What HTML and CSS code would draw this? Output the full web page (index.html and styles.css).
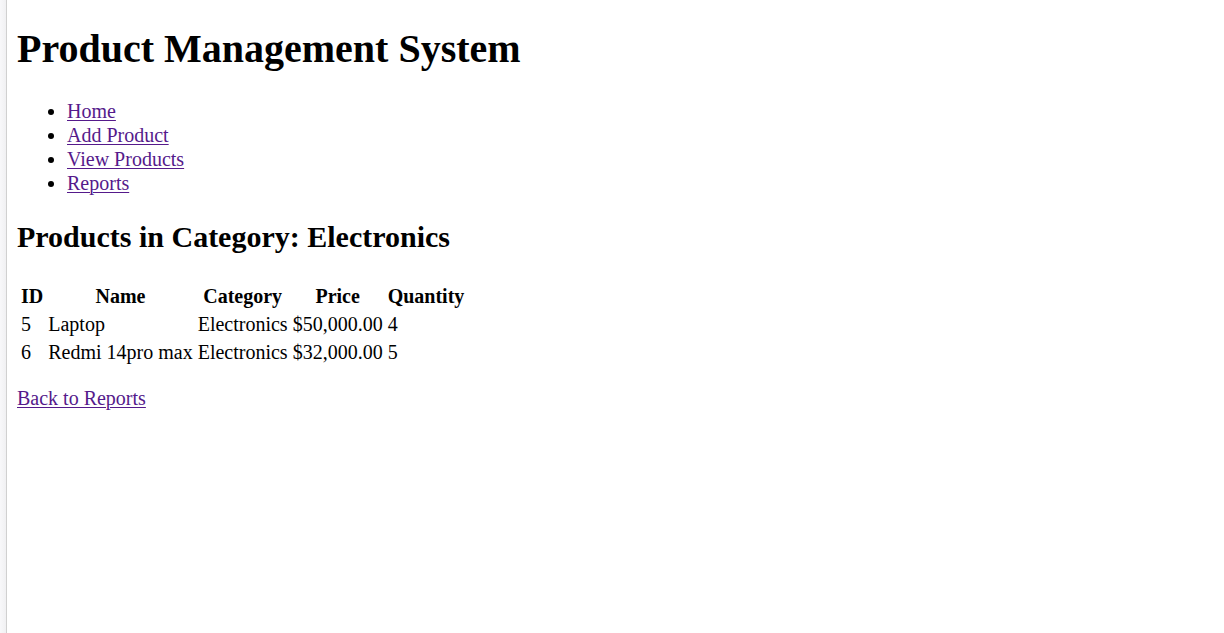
FILE: index.html
```html
<!DOCTYPE html>
<html lang="en">
<head>
<meta charset="utf-8">
<title>Product Management System</title>
<link rel="stylesheet" href="styles.css">
</head>
<body>
<div class="page">
  <header>
    <h1 class="site-title">Product Management System</h1>
    <nav>
      <ul class="nav-list">
        <li><a href="#home">Home</a></li>
        <li><a href="#add">Add Product</a></li>
        <li><a href="#view">View Products</a></li>
        <li><a href="#reports">Reports</a></li>
      </ul>
    </nav>
  </header>
  <main>
    <h2 class="section-title">Products in Category: Electronics</h2>
    <table class="products">
      <thead>
        <tr><th>ID</th><th>Name</th><th>Category</th><th>Price</th><th>Quantity</th></tr>
      </thead>
      <tbody>
        <tr><td>5</td><td>Laptop</td><td>Electronics</td><td>$50,000.00</td><td>4</td></tr>
        <tr><td>6</td><td>Redmi 14pro max</td><td>Electronics</td><td>$32,000.00</td><td>5</td></tr>
      </tbody>
    </table>
    <p class="back"><a href="#reports">Back to Reports</a></p>
  </main>
</div>
</body>
</html>
```
FILE: styles.css
```css
body {
  margin: 0;
  background: linear-gradient(to right, #f8f8fa, #f0f0f2 6px);
  color: #000;
  font-family: "Liberation Serif", "Times New Roman", serif;
  font-size: 20px;
  line-height: 24px;
}

.page {
  box-sizing: border-box;
  min-height: 100vh;
  margin-left: 6px;
  padding: 26px 10px 10px;
  border-left: 1px solid #d0d0d0;
  background: #fff;
}

a {
  color: #551a8b;
  text-decoration-thickness: 1px;
  text-underline-offset: 2px;
}

.site-title {
  margin: 0 0 27px;
  font-size: 40px;
  line-height: 46px;
}

.nav-list {
  margin: 0;
  padding-left: 50px;
}

.section-title {
  margin: 25px 0 27px;
  font-size: 30px;
  line-height: 34px;
}

.products {
  border-spacing: 3px;
}

.products th,
.products td {
  padding: 1px;
  line-height: 23px;
}

.products td {
  text-align: left;
}

.back {
  margin: 18px 0 0;
}
```
